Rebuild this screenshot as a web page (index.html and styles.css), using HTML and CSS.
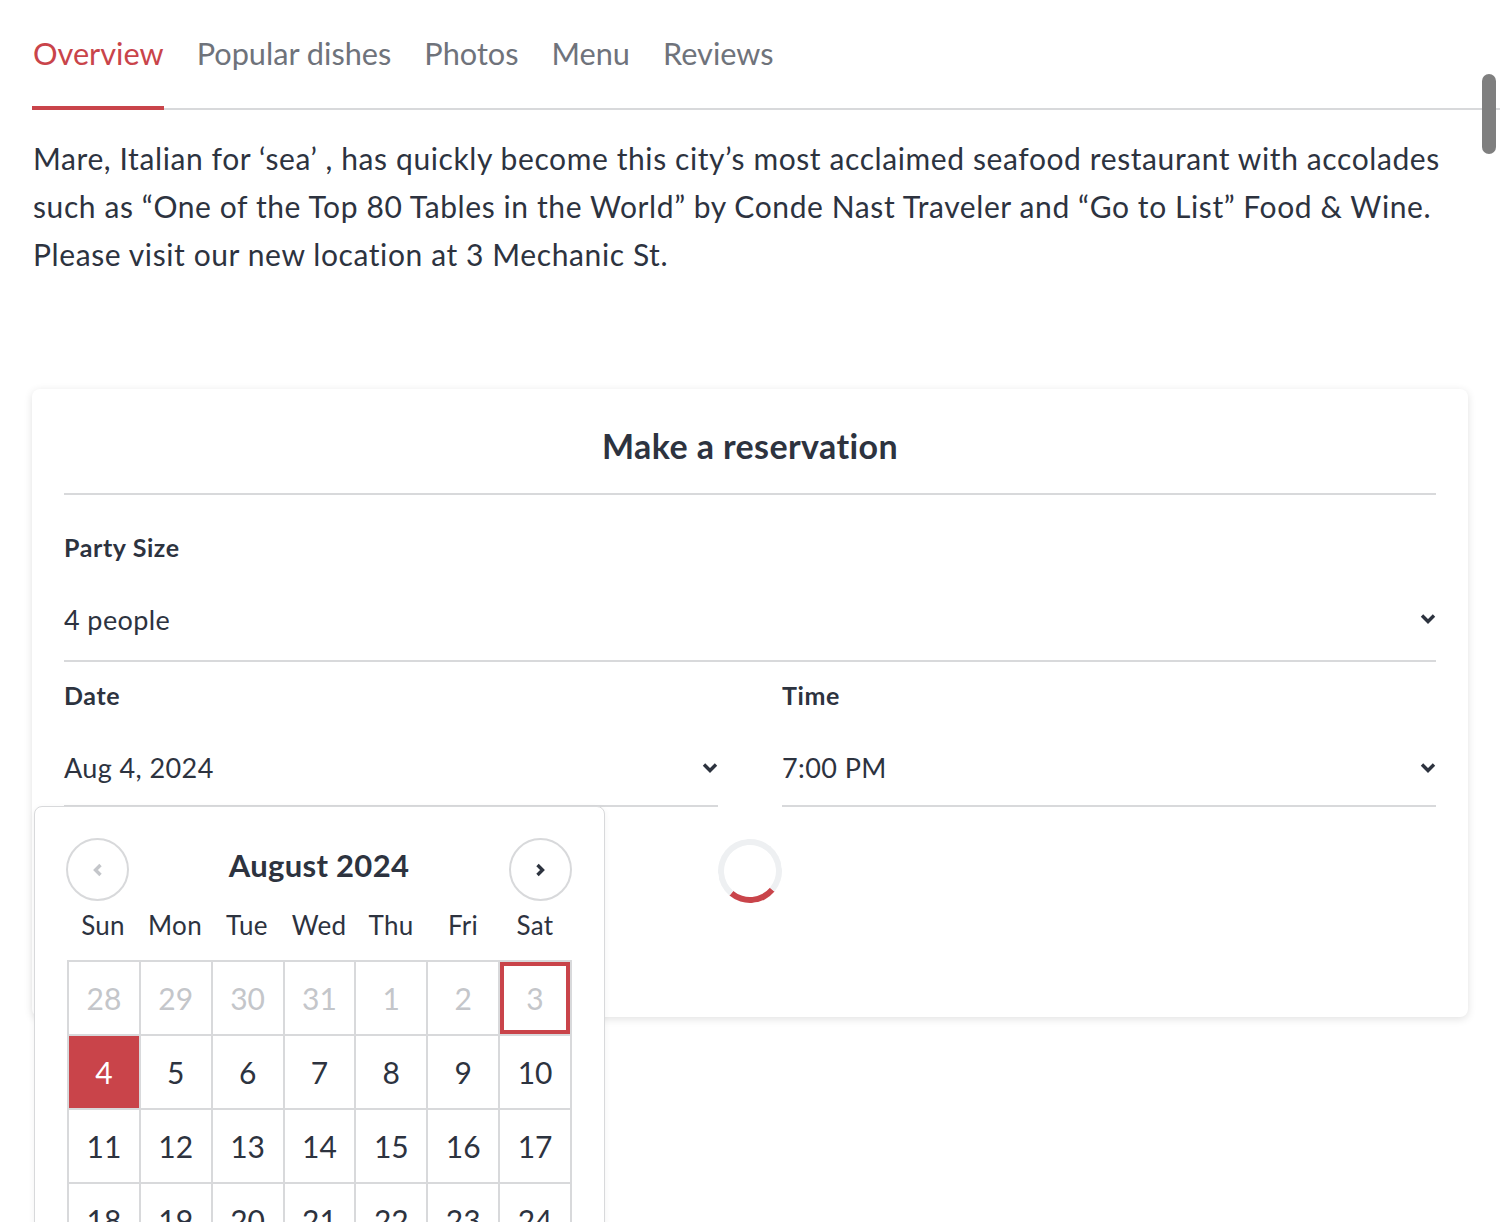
FILE: index.html
```html
<!DOCTYPE html>
<html lang="en">
<head>
<meta charset="utf-8">
<title>Mare - Overview</title>
<link rel="stylesheet" href="styles.css">
</head>
<body>
<div class="page">
  <nav class="tabs">
    <a class="tab active">Overview</a>
    <a class="tab">Popular dishes</a>
    <a class="tab">Photos</a>
    <a class="tab">Menu</a>
    <a class="tab">Reviews</a>
  </nav>
  <p class="about">Mare, Italian for ‘sea’ , has quickly become this city’s most acclaimed seafood restaurant with accolades such as “One of the Top 80 Tables in the World” by Conde Nast Traveler and “Go to List” Food &amp; Wine. Please visit our new location at 3 Mechanic St.</p>

  <section class="card">
    <h2 class="card-title">Make a reservation</h2>
    <div class="field party">
      <div class="label">Party Size</div>
      <div class="select">
        <span>4 people</span>
        <svg class="chev" viewBox="0 0 16 12" width="16" height="12"><path d="M2 2.5l6 6 6-6" fill="none" stroke="#2d333f" stroke-width="3.4"/></svg>
      </div>
    </div>
    <div class="row">
      <div class="field date-field">
        <div class="label">Date</div>
        <div class="select">
          <span>Aug 4, 2024</span>
          <svg class="chev" viewBox="0 0 16 12" width="16" height="12"><path d="M2 2.5l6 6 6-6" fill="none" stroke="#2d333f" stroke-width="3.4"/></svg>
        </div>
        <div class="calendar">
          <div class="cal-head">
            <button class="nav-btn"><svg viewBox="0 0 16 16" width="16" height="16"><path d="M10.5 3L5.5 8l5 5" fill="none" stroke="#c4c6ca" stroke-width="3.4"/></svg></button>
            <div class="month">August 2024</div>
            <button class="nav-btn"><svg viewBox="0 0 16 16" width="16" height="16"><path d="M5.5 3l5 5-5 5" fill="none" stroke="#2d333f" stroke-width="3.4"/></svg></button>
          </div>
          <div class="weekdays">
            <span>Sun</span><span>Mon</span><span>Tue</span><span>Wed</span><span>Thu</span><span>Fri</span><span>Sat</span>
          </div>
          <table class="days">
            <tr><td class="muted">28</td><td class="muted">29</td><td class="muted">30</td><td class="muted">31</td><td class="muted">1</td><td class="muted">2</td><td class="muted today">3</td></tr>
            <tr><td class="selected">4</td><td>5</td><td>6</td><td>7</td><td>8</td><td>9</td><td>10</td></tr>
            <tr><td>11</td><td>12</td><td>13</td><td>14</td><td>15</td><td>16</td><td>17</td></tr>
            <tr><td>18</td><td>19</td><td>20</td><td>21</td><td>22</td><td>23</td><td>24</td></tr>
            <tr><td>25</td><td>26</td><td>27</td><td>28</td><td>29</td><td>30</td><td>31</td></tr>
          </table>
        </div>
      </div>
      <div class="field">
        <div class="label">Time</div>
        <div class="select">
          <span>7:00 PM</span>
          <svg class="chev" viewBox="0 0 16 12" width="16" height="12"><path d="M2 2.5l6 6 6-6" fill="none" stroke="#2d333f" stroke-width="3.4"/></svg>
        </div>
      </div>
    </div>
    <div class="loading">
      <div class="spinner"></div>
    </div>
  </section>
</div>
<div class="scroll-thumb"></div>
</body>
</html>
```

FILE: styles.css
```css
* { box-sizing: border-box; }
html, body {
  margin: 0;
  padding: 0;
  background: #fff;
  height: 1222px;
  overflow: hidden;
}
body {
  font-family: Lato, "Noto Sans", sans-serif;
  color: #2d333f;
}
.page {
  padding: 0 32px;
}
.tabs {
  display: flex;
  gap: 32px;
  padding-top: 36px;
  border-bottom: 2px solid #d8d9db;
  margin-right: -32px;
}
.tab {
  font-size: 30.7px;
  line-height: 36px;
  color: #6f737b;
  padding: 0 0 34px 1px;
  border-bottom: 4px solid transparent;
  margin-bottom: -2px;
  text-decoration: none;
}
.tab.active {
  color: #c9444a;
  border-bottom-color: #c9444a;
}
.about {
  margin: 24px 0 0 1px;
  font-size: 30px;
  line-height: 48px;
  letter-spacing: 0.6px;
  color: #2d333f;
  max-width: 1434px;
}
.card {
  margin-top: 111px;
  width: 1436px;
  background: #fff;
  border-radius: 8px;
  box-shadow: 0 2px 8px rgba(0,0,0,0.12);
  padding: 32px 32px 0 32px;
}
.card-title {
  margin: 0;
  text-align: center;
  font-size: 34px;
  font-weight: 700;
  letter-spacing: 0.4px;
  line-height: 50px;
  padding-bottom: 22px;
  border-bottom: 2px solid #d8d9db;
}
.field {
  position: relative;
  flex: 1;
}
.label {
  font-size: 25px;
  font-weight: 700;
  letter-spacing: 0.6px;
  line-height: 32px;
}
.party .label { padding-top: 36px; }
.select {
  display: flex;
  align-items: center;
  justify-content: space-between;
  font-size: 27px;
  letter-spacing: 0.4px;
  border-bottom: 2px solid #d8d9db;
}
.party .select { height: 99px; padding-top: 17px; padding-bottom: 2px; }
.row {
  display: flex;
  gap: 64px;
}
.row .label { padding-top: 17px; }
.row .select { height: 96px; padding-top: 25px; padding-bottom: 6px; }
.chev { display: block; }
.loading {
  display: flex;
  justify-content: center;
  padding: 32px 0 114px;
}
.spinner {
  width: 64px;
  height: 64px;
  border-radius: 50%;
  border: 6px solid #eef0f2;
  border-bottom-color: #c9444a;
  transform: rotate(-5deg);
}

/* Calendar dropdown */
.calendar {
  position: absolute;
  top: calc(100% - 1px);
  left: -30px;
  width: 571px;
  height: 480px;
  background: #fff;
  border: 1px solid #d8d9db;
  border-radius: 8px 8px 0 0;
  padding: 31px 32px 0 31px;
  z-index: 2;
  box-shadow: 0 2px 6px rgba(0,0,0,0.06);
}
.cal-head {
  display: flex;
  align-items: center;
  justify-content: space-between;
}
.nav-btn {
  width: 63px;
  height: 63px;
  border-radius: 50%;
  border: 2px solid #d8d9db;
  background: #fff;
  display: flex;
  align-items: center;
  justify-content: center;
  padding: 0;
}
.nav-btn svg { display: block; }
.month {
  font-size: 31px;
  font-weight: 700;
  letter-spacing: 0.3px;
  margin-top: -10px;
}
.weekdays {
  display: grid;
  grid-template-columns: repeat(7, 72px);
  margin: 6px 0 0 1px;
  font-size: 26px;
  letter-spacing: 0.3px;
  line-height: 36px;
  text-align: center;
}
.days {
  border-collapse: collapse;
  margin: 17px 0 0 1px;
}
.days td {
  width: 72px;
  height: 74px;
  border: 2px solid #d8d9db;
  text-align: center;
  font-size: 30px;
  padding: 0;
}
.days td.muted { color: #c4c6ca; }
.days td.today { box-shadow: inset 0 0 0 4px #c9444a; }
.days td.selected { background: #c9444a; color: #fff; }

.scroll-thumb {
  position: fixed;
  top: 74px;
  right: 4px;
  width: 14px;
  height: 80px;
  border-radius: 7px;
  background: #7f7f7f;
}
```
